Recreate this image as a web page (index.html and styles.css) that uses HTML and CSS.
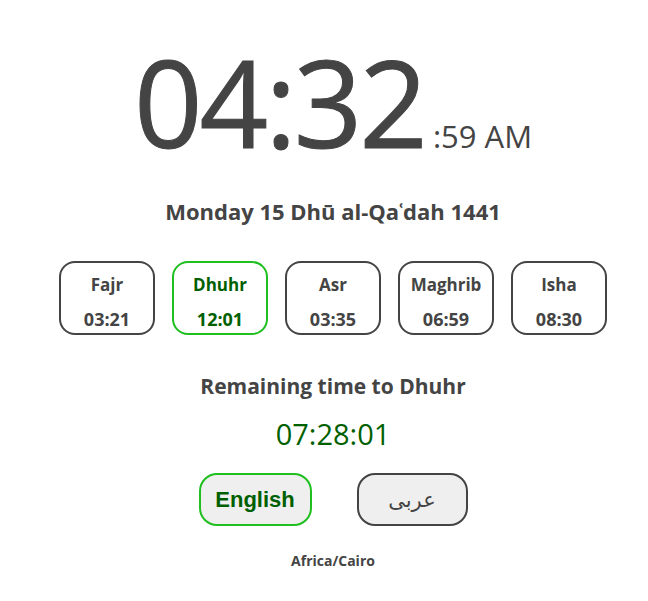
FILE: index.html
```html
<!DOCTYPE html>
<html lang="en">
<head>
<meta charset="utf-8">
<title>Prayer Times</title>
<link rel="stylesheet" href="styles.css">
</head>
<body>
<main class="page">
  <div class="clock">
    <span class="clock-main">04:32</span><span class="clock-sec">:59 AM</span>
  </div>
  <div class="date">Monday 15 Dhū al-Qaʿdah 1441</div>
  <div class="prayers">
    <div class="prayer"><div class="p-name">Fajr</div><div class="p-time">03:21</div></div>
    <div class="prayer active"><div class="p-name">Dhuhr</div><div class="p-time">12:01</div></div>
    <div class="prayer"><div class="p-name">Asr</div><div class="p-time">03:35</div></div>
    <div class="prayer"><div class="p-name">Maghrib</div><div class="p-time">06:59</div></div>
    <div class="prayer"><div class="p-name">Isha</div><div class="p-time">08:30</div></div>
  </div>
  <div class="remaining">Remaining time to Dhuhr</div>
  <div class="countdown">07:28:01</div>
  <div class="langs">
    <button class="lang active">English</button>
    <button class="lang ar">عربى</button>
  </div>
  <div class="tz">Africa/Cairo</div>
</main>
</body>
</html>
```
FILE: styles.css
```css
html, body { margin: 0; padding: 0; background: #fff; }
body {
  font-family: "Open Sans", "Noto Sans", sans-serif;
  color: #444;
}
.page {
  display: flex;
  flex-direction: column;
  align-items: center;
  padding-left: 18px;
  padding-top: 32px;
}
.clock {
  display: flex;
  align-items: baseline;
  line-height: 1;
}
.clock-main {
  font-size: 120px;
  letter-spacing: -3px;
  height: 130px;
  line-height: 140px;
  -webkit-text-stroke: 1px #444;
}
.clock-sec {
  font-size: 31px;
  margin-left: 8px;
}
.date {
  margin-top: 35px;
  font-size: 22px;
  font-weight: 700;
  line-height: 28px;
}
.prayers {
  display: flex;
  gap: 17px;
  margin-top: 36px;
}
.prayer {
  box-sizing: border-box;
  width: 96px;
  height: 74px;
  padding-top: 8px;
  border: 2px solid #444;
  border-radius: 16px;
  display: flex;
  flex-direction: column;
  align-items: center;
  justify-content: center;
  gap: 14px;
  font-weight: 700;
  font-size: 17px;
  line-height: 20px;
}
.p-time { font-size: 18px; }
.prayer.active { border-color: #1fbf1f; color: #006000; }
.remaining {
  margin-top: 37px;
  font-size: 21px;
  font-weight: 700;
  line-height: 28px;
}
.countdown {
  margin-top: 16px;
  font-size: 29px;
  line-height: 36px;
  color: #006000;
}
.langs {
  display: flex;
  gap: 45px;
  margin-top: 21px;
}
.lang {
  box-sizing: border-box;
  width: 113px;
  height: 53px;
  border: 2px solid #444;
  border-radius: 18px;
  background: #efefef;
  color: #444;
  font-family: "Liberation Sans", Arial, sans-serif;
  padding: 0;
}
.lang.active {
  border-color: #1fbf1f;
  color: #006000;
  font-size: 22px;
  font-weight: 700;
}
.lang.ar {
  width: 111px;
  font-family: "DejaVu Sans", "Noto Sans", sans-serif;
  font-size: 21px;
}
.tz {
  margin-top: 25px;
  font-size: 14px;
  font-weight: 700;
  line-height: 20px;
}
```
